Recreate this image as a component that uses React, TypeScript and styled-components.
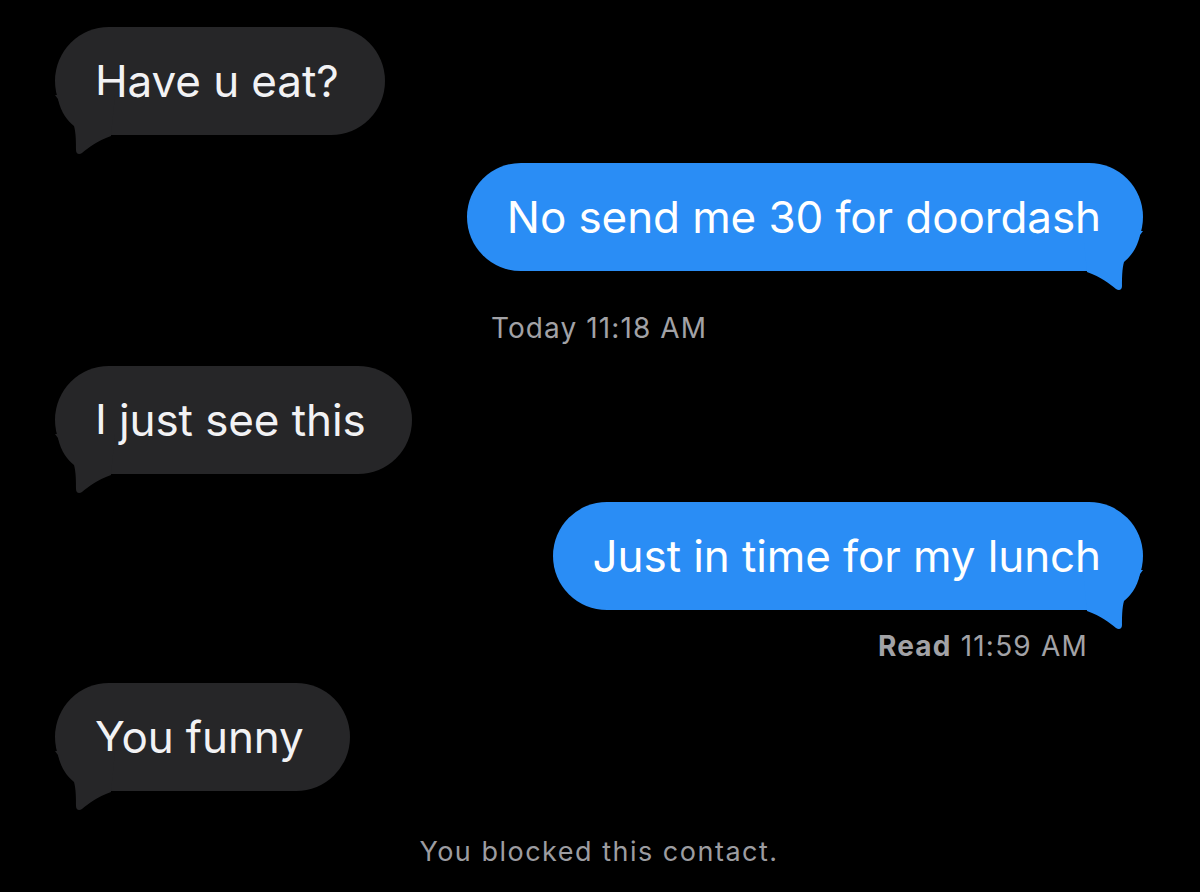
import styled, { createGlobalStyle } from 'styled-components';

const GlobalStyle = createGlobalStyle`
  html, body {
    margin: 0;
    padding: 0;
    background: #000;
  }
  body {
    font-family: Inter, "Noto Sans", "Liberation Sans", sans-serif;
    -webkit-font-smoothing: antialiased;
  }
`;

type Side = 'in' | 'out';

const Tail = ({ side }: { side: Side }) => (
  <TailSvg $side={side} viewBox="0 0 60 60" width="60" height="60" aria-hidden>
    <path d="M0 0 L3 4 C6 18 13 26 19 31 C21 38 21 48 21 55 C21 59 24 60 27 58 C33 53 42 46 56 41 L60 0 Z" />
  </TailSvg>
);

const Message = ({ side, children }: { side: Side; children: string }) => (
  <Row $side={side}>
    <Bubble $side={side}>
      {children}
      <Tail side={side} />
    </Bubble>
  </Row>
);

const App = () => {
  return (
    <>
      <GlobalStyle />
      <Thread>
        <Message side="in">Have u eat?</Message>
        <Message side="out">No send me 30 for doordash</Message>
        <Stamp>Today 11:18 AM</Stamp>
        <Message side="in">I just see this</Message>
        <Message side="out">Just in time for my lunch</Message>
        <Receipt>
          <b>Read</b> 11:59 AM
        </Receipt>
        <Message side="in">You funny</Message>
        <Notice>You blocked this contact.</Notice>
      </Thread>
    </>
  );
};

export default App;

const Thread = styled.div`
  width: 1200px;
  height: 892px;
  box-sizing: border-box;
  padding: 27px 57px 0 55px;
  display: flex;
  flex-direction: column;
  overflow: hidden;
  background: #000;
`;

const Row = styled.div<{ $side: Side }>`
  display: flex;
  justify-content: ${(p) => (p.$side === 'out' ? 'flex-end' : 'flex-start')};
  & + & {
    margin-top: 28px;
  }
`;

const Bubble = styled.div<{ $side: Side }>`
  position: relative;
  height: 108px;
  box-sizing: border-box;
  padding: ${(p) => (p.$side === 'out' ? '0 42px 0 40px' : '0 46px 0 40px')};
  display: flex;
  align-items: center;
  border-radius: 54px;
  font-size: 44px;
  letter-spacing: -0.1px;
  white-space: nowrap;
  color: ${(p) => (p.$side === 'out' ? '#ffffff' : '#f2f2f4')};
  background: ${(p) => (p.$side === 'out' ? '#2a8df5' : '#262628')};
  fill: ${(p) => (p.$side === 'out' ? '#2a8df5' : '#262628')};
`;

const TailSvg = styled.svg<{ $side: Side }>`
  position: absolute;
  bottom: -20px;
  ${(p) => (p.$side === 'out' ? 'right: 0; transform: scaleX(-1);' : 'left: 0;')}
`;

const Stamp = styled.div`
  margin: 41px 0 22px;
  text-align: center;
  font-size: 28px;
  line-height: 32px;
  letter-spacing: 1.1px;
  color: #a2a2a6;
`;

const Receipt = styled.div`
  margin: 20px 0 21px;
  padding-right: 55px;
  text-align: right;
  font-size: 28px;
  line-height: 32px;
  letter-spacing: 1.2px;
  color: #a2a2a6;

  b {
    font-weight: 700;
  }
`;

const Notice = styled.div`
  margin-top: 45px;
  text-align: center;
  font-size: 27px;
  line-height: 32px;
  letter-spacing: 1.5px;
  color: #9c9ca0;
`;
